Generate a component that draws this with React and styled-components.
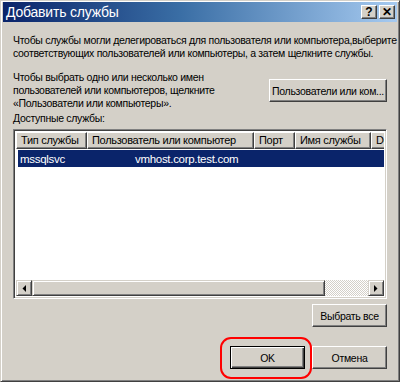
import React from "react";
import styled, { createGlobalStyle } from "styled-components";

const GlobalStyle = createGlobalStyle`
  html, body { margin: 0; padding: 0; background: #d4d0c8; }
  body {
    font-family: "Liberation Sans", Arial, sans-serif;
    font-size: 10.5px;
    letter-spacing: -0.3px;
    color: #000;
  }
`;

const Window = styled.div`
  width: 400px;
  height: 382px;
  box-sizing: border-box;
  overflow: hidden;
  background: #d4d0c8;
  border-top: 1px solid #d4d0c8;
  border-left: 1px solid #d4d0c8;
  border-right: 1px solid #404040;
  border-bottom: 1px solid #404040;
  box-shadow: inset 1px 1px 0 #fff, inset -1px -1px 0 #808080;
  padding: 1px 2px 2px 2px;
  display: flex;
  flex-direction: column;
`;

const TitleBar = styled.div`
  height: 20px;
  flex: none;
  display: flex;
  align-items: center;
  justify-content: space-between;
  padding: 0 2px 0 3px;
  background: linear-gradient(to right, #0a246a 0%, #3a6ea5 45%, #a6caf0 100%);
`;

const Title = styled.span`
  color: #fff;
  font-size: 14px;
  letter-spacing: -0.2px;
`;

const TitleButtons = styled.div`
  display: flex;
  gap: 2px;
`;

const TitleButton = styled.div`
  width: 16px;
  height: 14px;
  box-sizing: border-box;
  background: #d4d0c8;
  border-top: 1px solid #fff;
  border-left: 1px solid #fff;
  border-right: 1px solid #404040;
  border-bottom: 1px solid #404040;
  box-shadow: inset -1px -1px 0 #808080;
  display: flex;
  align-items: center;
  justify-content: center;
  font-weight: bold;
  font-size: 12px;
  letter-spacing: 0;
  line-height: 1;
`;

const Body = styled.div`
  flex: 1;
  min-width: 0;
  display: flex;
  flex-direction: column;
  padding: 12px 10px 0 10px;
`;

const Text = styled.p`
  margin: 0;
  line-height: 13px;
  white-space: nowrap;
`;

const PickRow = styled.div`
  display: flex;
  align-items: center;
  justify-content: space-between;
  margin-top: 11px;
`;

const Button = styled.button`
  font-family: inherit;
  font-size: 10.5px;
  letter-spacing: -0.3px;
  color: #000;
  background: #d4d0c8;
  width: ${(p) => p.$w || 75}px;
  height: 23px;
  box-sizing: border-box;
  padding: 0 2px;
  white-space: nowrap;
  overflow: hidden;
  border-top: 1px solid #fff;
  border-left: 1px solid #fff;
  border-right: 1px solid #404040;
  border-bottom: 1px solid #404040;
  box-shadow: inset -1px -1px 0 #808080;
  ${(p) =>
    p.$default &&
    `
    border: 1px solid #000;
    box-shadow: inset 1px 1px 0 #fff, inset -1px -1px 0 #404040, inset -2px -2px 0 #808080;
  `}
`;

const Label = styled.div`
  margin-top: 2px;
  line-height: 13px;
`;

const ListBox = styled.div`
  margin-top: 4px;
  height: 170px;
  box-sizing: border-box;
  border-top: 1px solid #808080;
  border-left: 1px solid #808080;
  border-right: 1px solid #fff;
  border-bottom: 1px solid #fff;
  box-shadow: inset 1px 1px 0 #404040, inset -1px -1px 0 #d4d0c8;
  padding: 2px;
  display: flex;
  flex-direction: column;
  background: #fff;
`;

const Header = styled.div`
  display: flex;
  height: 17px;
  flex: none;
  overflow: hidden;
`;

const HeaderCell = styled.div`
  width: ${(p) => p.$w}px;
  flex: none;
  box-sizing: border-box;
  background: #d4d0c8;
  border-top: 1px solid #fff;
  border-left: 1px solid #fff;
  border-right: 1px solid #404040;
  border-bottom: 1px solid #404040;
  box-shadow: inset -1px -1px 0 #808080;
  padding-left: 4px;
  font-size: 11px;
  line-height: 15px;
  white-space: nowrap;
  overflow: hidden;
`;

const Rows = styled.div`
  flex: 1;
  padding: 1px 0 0 2px;
`;

const Row = styled.div`
  display: flex;
  height: 17px;
  align-items: center;
  background: ${(p) => (p.$selected ? "#0a246a" : "transparent")};
  color: ${(p) => (p.$selected ? "#fff" : "#000")};
  font-size: 11.5px;
`;

const Cell = styled.div`
  width: ${(p) => p.$w}px;
  flex: none;
  padding-left: ${(p) => p.$pad || 2}px;
  box-sizing: border-box;
  white-space: nowrap;
`;

const HScroll = styled.div`
  display: flex;
  height: 16px;
  flex: none;
`;

const ScrollArrow = styled.div`
  width: 16px;
  height: 16px;
  box-sizing: border-box;
  background: #d4d0c8;
  border-top: 1px solid #d4d0c8;
  border-left: 1px solid #d4d0c8;
  border-right: 1px solid #404040;
  border-bottom: 1px solid #404040;
  box-shadow: inset 1px 1px 0 #fff, inset -1px -1px 0 #808080;
  display: flex;
  align-items: center;
  justify-content: center;
`;

const Thumb = styled(ScrollArrow)`
  width: 293px;
`;

const Track = styled.div`
  flex: 1;
  background-color: #fff;
  background-image: conic-gradient(#d4d0c8 25%, #fff 0 50%, #d4d0c8 0 75%, #fff 0);
  background-size: 2px 2px;
`;

const SelectAllRow = styled.div`
  display: flex;
  justify-content: flex-end;
  margin-top: 5px;
`;

const Footer = styled.div`
  display: flex;
  justify-content: flex-end;
  gap: 7px;
  margin-top: 19px;
`;

const Highlight = styled.div`
  position: relative;
  &::after {
    content: "";
    position: absolute;
    left: -10px;
    right: -7px;
    top: -9px;
    bottom: -10px;
    border: 2px solid #ff0000;
    border-radius: 11px;
    pointer-events: none;
  }
`;

const Arrow = ({ dir }) => (
  <svg width="4" height="7" viewBox="0 0 4 7">
    {dir === "left" ? (
      <polygon points="4,0 4,7 0.5,3.5" fill="#000" />
    ) : (
      <polygon points="0,0 0,7 3.5,3.5" fill="#000" />
    )}
  </svg>
);

const columns = [
  { title: "Тип службы", w: 71 },
  { title: "Пользователь или компьютер", w: 167 },
  { title: "Порт", w: 41 },
  { title: "Имя службы", w: 76 },
  { title: "Domain", w: 60 },
];

export default function App() {
  return (
    <>
      <GlobalStyle />
      <Window>
        <TitleBar>
          <Title>Добавить службы</Title>
          <TitleButtons>
            <TitleButton>?</TitleButton>
            <TitleButton>✕</TitleButton>
          </TitleButtons>
        </TitleBar>
        <Body>
          <Text>
            Чтобы службы могли делегироваться для пользователя или компьютера,выберите
            <br />
            соответствующих пользователей или компьютеры, а затем щелкните службы.
          </Text>
          <PickRow>
            <Text>
              Чтобы выбрать одно или несколько имен
              <br />
              пользователей или компьютеров, щелкните
              <br />
              «Пользователи или компьютеры».
            </Text>
            <Button $w={118}>Пользователи или ком...</Button>
          </PickRow>
          <Label>Доступные службы:</Label>
          <ListBox>
            <Header>
              {columns.map((c) => (
                <HeaderCell key={c.title} $w={c.w}>
                  {c.title}
                </HeaderCell>
              ))}
            </Header>
            <Rows>
              <Row $selected>
                <Cell $w={71}>mssqlsvc</Cell>
                <Cell $w={296} $pad={46}>vmhost.corp.test.com</Cell>
              </Row>
            </Rows>
            <HScroll>
              <ScrollArrow>
                <Arrow dir="left" />
              </ScrollArrow>
              <Thumb />
              <Track />
              <ScrollArrow>
                <Arrow dir="right" />
              </ScrollArrow>
            </HScroll>
          </ListBox>
          <SelectAllRow>
            <Button $w={75}>Выбрать все</Button>
          </SelectAllRow>
          <Footer>
            <Highlight>
              <Button $default $w={75}>OK</Button>
            </Highlight>
            <Button $w={75}>Отмена</Button>
          </Footer>
        </Body>
      </Window>
    </>
  );
}
